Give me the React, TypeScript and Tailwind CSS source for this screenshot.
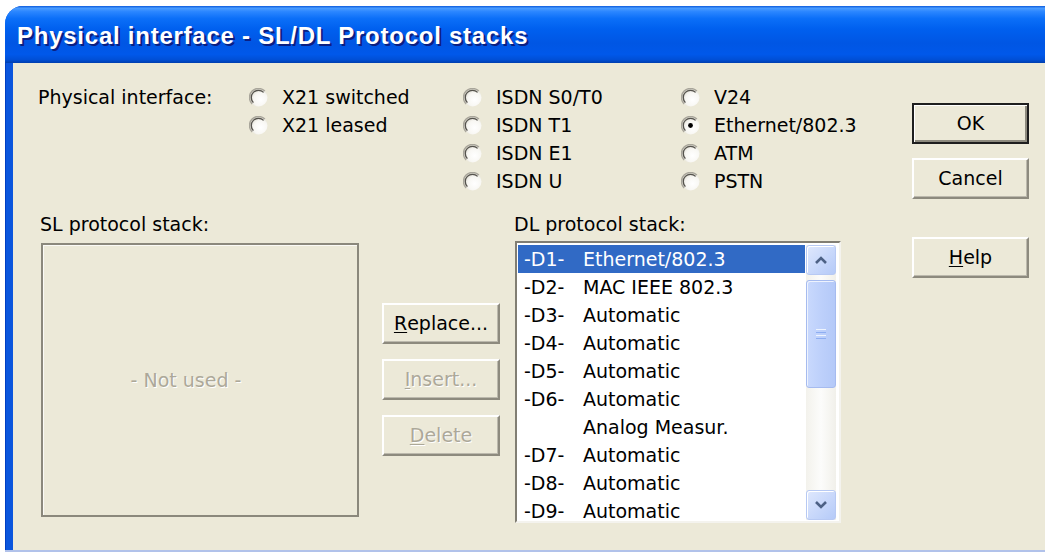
import type { ReactNode } from "react";
import clsx from "clsx";

const radioCols: { w: string; items: { label: string; checked?: boolean }[] }[] = [
  { w: "w-[214px]", items: [{ label: "X21 switched" }, { label: "X21 leased" }] },
  { w: "w-[218px]", items: [{ label: "ISDN S0/T0" }, { label: "ISDN T1" }, { label: "ISDN E1" }, { label: "ISDN U" }] },
  { w: "w-[200px]", items: [{ label: "V24" }, { label: "Ethernet/802.3", checked: true }, { label: "ATM" }, { label: "PSTN" }] },
];

const dlStack: [string, string][] = [
  ["-D1-", "Ethernet/802.3"],
  ["-D2-", "MAC IEEE 802.3"],
  ["-D3-", "Automatic"],
  ["-D4-", "Automatic"],
  ["-D5-", "Automatic"],
  ["-D6-", "Automatic"],
  ["", "Analog Measur."],
  ["-D7-", "Automatic"],
  ["-D8-", "Automatic"],
  ["-D9-", "Automatic"],
];

function RadioDot({ checked }: { checked?: boolean }) {
  return (
    <svg width="19" height="19" viewBox="0 0 19 19" className="shrink-0">
      <defs>
        <radialGradient id="radioFill" cx="62%" cy="62%" r="70%">
          <stop offset="0" stopColor="#ffffff" />
          <stop offset="0.55" stopColor="#f8f7f3" />
          <stop offset="1" stopColor="#d4d1c4" />
        </radialGradient>
      </defs>
      <circle cx="9.5" cy="9.5" r="9" fill="url(#radioFill)" />
      <path d="M3.1 15.9 A9 9 0 0 1 15.9 3.1" fill="none" stroke="#a9a69b" strokeWidth="1.4" />
      <path d="M4.4 14.6 A7.2 7.2 0 0 1 14.6 4.4" fill="none" stroke="#55534d" strokeWidth="1.3" />
      {checked && <circle cx="9.5" cy="9.5" r="2.4" fill="#000" />}
    </svg>
  );
}

function Radio({ label, checked }: { label: string; checked?: boolean }) {
  return (
    <div className="h-[28px] flex items-center gap-[14px]">
      <RadioDot checked={checked} />
      <span>{label}</span>
    </div>
  );
}

function Button({
  children,
  isDefault,
  disabled,
}: {
  children: ReactNode;
  isDefault?: boolean;
  disabled?: boolean;
}) {
  return (
    <div
      className={clsx(
        "h-[41px] flex items-center justify-center bg-[#ECE9D8]",
        isDefault
          ? "border-2 border-[#1e1e1e] shadow-[inset_1px_1px_0_#fff,inset_-2px_-2px_0_#8d8a7e]"
          : "border-2 border-t-white border-l-white border-r-[#8d8a7e] border-b-[#8d8a7e] shadow-[inset_-1px_-1px_0_#bcb9ad]",
        disabled && "text-[#aca899] [text-shadow:1px_1px_0_#fff]"
      )}
    >
      {children}
    </div>
  );
}

function Chevron({ up }: { up?: boolean }) {
  return (
    <svg width="14" height="10" viewBox="0 0 14 10">
      <path
        d={up ? "M2 8 L7 3 L12 8" : "M2 2 L7 7 L12 2"}
        fill="none"
        stroke="#4d6185"
        strokeWidth="2.6"
        strokeLinejoin="miter"
      />
    </svg>
  );
}

function ScrollButton({ up }: { up?: boolean }) {
  return (
    <div className="h-[30px] rounded-[3px] border border-[#b7c9f3] bg-gradient-to-br from-[#dfe8fd] to-[#b5caf8] shadow-[inset_1px_1px_0_#fff] flex items-center justify-center">
      <Chevron up={up} />
    </div>
  );
}

function Scrollbar() {
  return (
    <div className="w-[30px] flex flex-col bg-gradient-to-r from-[#f3f2ec] via-[#fcfcfb] to-[#f1f0ea]">
      <ScrollButton up />
      <div className="mt-[5px] h-[108px] rounded-[3px] border border-[#a6bbef] bg-gradient-to-r from-[#c9d9fd] via-[#bdd0fb] to-[#b4c9f8] shadow-[inset_1px_1px_0_#eef3fe] flex flex-col items-center justify-center gap-[2px]">
        <div className="w-[10px] h-px bg-[#eef4fe]" />
        <div className="w-[10px] h-px bg-[#8eaef2]" />
        <div className="w-[10px] h-px bg-[#eef4fe]" />
        <div className="w-[10px] h-px bg-[#8eaef2]" />
      </div>
      <div className="flex-1" />
      <ScrollButton />
    </div>
  );
}

export default function App() {
  return (
    <div className="w-[1045px] h-[552px] bg-white pl-[5px] pt-[6px] overflow-hidden font-['DejaVu_Sans',sans-serif] text-[19px] text-black">
      <div className="h-full flex flex-col rounded-tl-[18px] overflow-hidden bg-[#0a55dd]">
        {/* caption */}
        <div className="h-[57px] shrink-0 flex items-center pl-[12px] pt-[2px] bg-[linear-gradient(to_bottom,#0b5add_0%,#4a9cff_4%,#2a86ff_10%,#0b6ff8_22%,#0060ef_40%,#0056e4_65%,#0058ea_85%,#004fd6_94%,#003eae_100%)]">
          <span className="font-['Liberation_Sans',sans-serif] font-bold text-[24px] tracking-[0.75px] text-white [text-shadow:2px_2px_0_#0b1f82]">
            Physical interface - SL/DL Protocol stacks
          </span>
        </div>

        {/* frame + client area */}
        <div className="flex-1 flex pl-[7px] border-l border-[#003ec2]">
          <div className="flex-1 flex bg-[#ECE9D8]">
            <div className="w-[899px]">
              <div className="flex pt-[20px] pl-[25px]">
                <div className="w-[211px] h-[28px] flex items-center">Physical interface:</div>
                {radioCols.map((col, i) => (
                  <div key={i} className={col.w}>
                    {col.items.map((it) => (
                      <Radio key={it.label} label={it.label} checked={it.checked} />
                    ))}
                  </div>
                ))}
              </div>

              <div className="flex items-start mt-[17px] pl-[27px]">
                <div className="w-[319px]">
                  <div className="h-[24px] flex items-center">SL protocol stack:</div>
                  <div className="mt-[7px] ml-px h-[274px] border-2 border-[#8b887c] shadow-[inset_1px_1px_0_#fbfaf6] flex items-center justify-center pr-[28px]">
                    <span className="text-[#aca899] [text-shadow:1px_1px_0_#fff]">- Not used -</span>
                  </div>
                </div>

                <div className="ml-[23px] mt-[91px] w-[118px] flex flex-col gap-[15px]">
                  <Button>
                    <span className="underline underline-offset-2">R</span>eplace...
                  </Button>
                  <Button disabled>
                    <span className="underline underline-offset-2">I</span>nsert...
                  </Button>
                  <Button disabled>
                    <span className="underline underline-offset-2">D</span>elete
                  </Button>
                </div>

                <div className="ml-[14px]">
                  <div className="h-[24px] flex items-center">DL protocol stack:</div>
                  <div className="mt-[5px] ml-px w-[326px] h-[282px] border-2 border-t-[#817e73] border-l-[#817e73] border-r-[#f4f3ee] border-b-[#f4f3ee] bg-white flex pt-[2px] pb-[1px] pr-[3px]">
                    <div className="flex-1 ml-px mr-px overflow-hidden">
                      {dlStack.map(([id, name], i) => (
                        <div
                          key={i}
                          className={clsx(
                            "h-[28px] flex items-center pl-[6px] whitespace-nowrap",
                            i === 0 && "bg-[#316ac5] text-white"
                          )}
                        >
                          <span className="w-[59px]">{id}</span>
                          <span>{name}</span>
                        </div>
                      ))}
                    </div>
                    <Scrollbar />
                  </div>
                </div>
              </div>
            </div>

            <div className="w-[117px] mt-[40px] flex flex-col">
              <Button isDefault>OK</Button>
              <div className="mt-[14px]">
                <Button>Cancel</Button>
              </div>
              <div className="mt-[38px]">
                <Button>
                  <span className="underline underline-offset-2">H</span>elp
                </Button>
              </div>
            </div>
          </div>
        </div>
        <div className="h-[2px] shrink-0 bg-[#b1c2ea]" />
      </div>
    </div>
  );
}
